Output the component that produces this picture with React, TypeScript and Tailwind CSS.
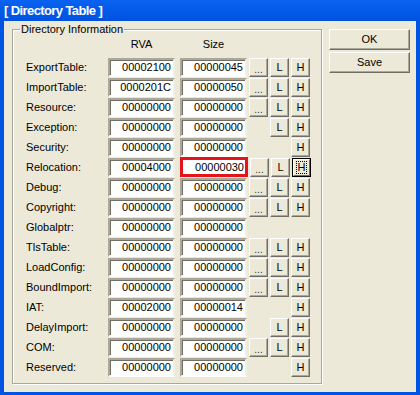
import React from "react";

type Row = { name: string; rva: string; size: string; dots: boolean; l: boolean; h: boolean };

const rows: Row[] = [
  { name: "ExportTable:", rva: "00002100", size: "00000045", dots: true, l: true, h: true },
  { name: "ImportTable:", rva: "0000201C", size: "00000050", dots: true, l: true, h: true },
  { name: "Resource:", rva: "00000000", size: "00000000", dots: true, l: true, h: true },
  { name: "Exception:", rva: "00000000", size: "00000000", dots: false, l: true, h: true },
  { name: "Security:", rva: "00000000", size: "00000000", dots: false, l: false, h: true },
  { name: "Relocation:", rva: "00004000", size: "00000030", dots: true, l: true, h: true },
  { name: "Debug:", rva: "00000000", size: "00000000", dots: true, l: true, h: true },
  { name: "Copyright:", rva: "00000000", size: "00000000", dots: true, l: true, h: true },
  { name: "Globalptr:", rva: "00000000", size: "00000000", dots: false, l: false, h: false },
  { name: "TlsTable:", rva: "00000000", size: "00000000", dots: true, l: true, h: true },
  { name: "LoadConfig:", rva: "00000000", size: "00000000", dots: true, l: true, h: true },
  { name: "BoundImport:", rva: "00000000", size: "00000000", dots: true, l: true, h: true },
  { name: "IAT:", rva: "00002000", size: "00000014", dots: false, l: false, h: true },
  { name: "DelayImport:", rva: "00000000", size: "00000000", dots: false, l: true, h: true },
  { name: "COM:", rva: "00000000", size: "00000000", dots: true, l: true, h: true },
  { name: "Reserved:", rva: "00000000", size: "00000000", dots: false, l: false, h: true },
];

function Edit({ value, red }: { value: string; red?: boolean }) {
  if (red) {
    return (
      <div className="w-[68px] h-[20px] -mt-[1px] border-[3px] border-[#E5141B] bg-white flex items-center justify-end pr-[1px] text-black">
        {value}
      </div>
    );
  }
  return (
    <div className="w-[67px] h-[19px] border-2 border-t-[#ACA899] border-l-[#ACA899] border-b-white border-r-[#F1EFE2] shadow-[inset_1px_1px_0_#716F64] bg-white flex items-center justify-end pr-[2px] text-black">
      {value}
    </div>
  );
}

function Btn({ label, focus, visible = true }: { label: string; focus?: boolean; visible?: boolean }) {
  if (!visible) return <div className="w-[19px] h-[19px]" />;
  if (focus) {
    return (
      <div className="w-[19px] h-[19px] border border-black bg-[#ECE9D8] flex">
        <div className="flex-1 border border-t-white border-l-white border-b-[#716F64] border-r-[#716F64] flex items-center justify-center">
          <span className="outline outline-1 outline-dotted outline-black leading-[11px] px-[1px]">{label}</span>
        </div>
      </div>
    );
  }
  return (
    <div className="w-[19px] h-[19px] border border-t-white border-l-white border-b-[#716F64] border-r-[#716F64] shadow-[inset_-1px_-1px_0_#ACA899] bg-[#ECE9D8] flex items-center justify-center text-black">
      {label === "..." ? <span className="text-[10px] mt-[4px] text-[#333]">...</span> : label}
    </div>
  );
}

function BigBtn({ label }: { label: string }) {
  return (
    <div className="w-[81px] h-[21px] border border-t-white border-l-white border-b-[#716F64] border-r-[#716F64] shadow-[inset_-1px_-1px_0_#ACA899] bg-[#ECE9D8] flex items-center justify-center text-black">
      {label}
    </div>
  );
}

export default function App() {
  return (
    <div className="w-[420px] h-[395px] bg-[#0054E3] flex flex-col font-['Liberation_Sans',Arial,sans-serif] text-[11px] text-black">
      <div className="h-[21px] flex items-center pl-[4px] bg-gradient-to-b from-[#0A62F0] to-[#0052E0]">
        <span className="text-white font-bold text-[13px] tracking-[-0.6px]">[ Directory Table ]</span>
      </div>
      <div className="flex-1 mx-[4px] mb-[3px] bg-[#ECE9D8] flex pl-[8px] pt-[8px]">
        <div className="relative w-[310px] h-[355px] border border-[#ACA899] shadow-[inset_1px_1px_0_#fff,1px_1px_0_#fff]">
          <div className="absolute -top-[7px] left-[7px] bg-[#ECE9D8] px-[1px] leading-[13px]">Directory Information</div>
          <div className="flex h-[28px] items-center pl-[13px]">
            <div className="w-[82px]" />
            <div className="w-[67px] text-center pt-[1px]">RVA</div>
            <div className="w-[67px] ml-[5px] text-center pt-[1px]">Size</div>
          </div>
          <div className="flex flex-col pl-[13px]">
            {rows.map((r, i) => (
              <div key={r.name} className="flex h-[20px] items-start">
                <div className="w-[82px] h-[19px] flex items-center">{r.name}</div>
                <Edit value={r.rva} />
                <div className="ml-[5px]">
                  <Edit value={r.size} red={i === 5} />
                </div>
                <div className="ml-[2px] flex gap-[2px]">
                  <Btn label="..." visible={r.dots} />
                  <Btn label="L" visible={r.l} />
                  <Btn label="H" visible={r.h} focus={i === 5} />
                </div>
              </div>
            ))}
          </div>
        </div>
        <div className="ml-[7px] flex flex-col gap-[2px]">
          <BigBtn label="OK" />
          <BigBtn label="Save" />
        </div>
      </div>
    </div>
  );
}
